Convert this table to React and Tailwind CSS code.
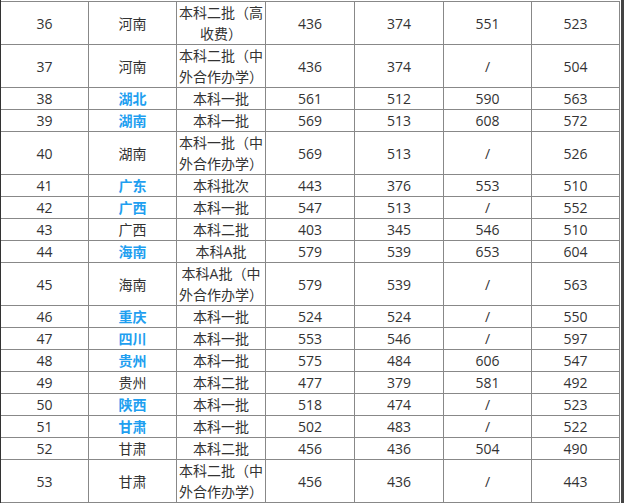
import React from 'react';

// 序号, 省份, 是否高亮, 批次, 四列分数
const rows = [
  [36, '河南', false, ['本科二批（高', '收费）'], '436', '374', '551', '523'],
  [37, '河南', false, ['本科二批（中', '外合作办学）'], '436', '374', '/', '504'],
  [38, '湖北', true, ['本科一批'], '561', '512', '590', '563'],
  [39, '湖南', true, ['本科一批'], '569', '513', '608', '572'],
  [40, '湖南', false, ['本科一批（中', '外合作办学）'], '569', '513', '/', '526'],
  [41, '广东', true, ['本科批次'], '443', '376', '553', '510'],
  [42, '广西', true, ['本科一批'], '547', '513', '/', '552'],
  [43, '广西', false, ['本科二批'], '403', '345', '546', '510'],
  [44, '海南', true, ['本科A批'], '579', '539', '653', '604'],
  [45, '海南', false, ['本科A批（中', '外合作办学）'], '579', '539', '/', '563'],
  [46, '重庆', true, ['本科一批'], '524', '524', '/', '550'],
  [47, '四川', true, ['本科一批'], '553', '546', '/', '597'],
  [48, '贵州', true, ['本科一批'], '575', '484', '606', '547'],
  [49, '贵州', false, ['本科二批'], '477', '379', '581', '492'],
  [50, '陕西', true, ['本科一批'], '518', '474', '/', '523'],
  [51, '甘肃', true, ['本科一批'], '502', '483', '/', '522'],
  [52, '甘肃', false, ['本科二批'], '456', '436', '504', '490'],
  [53, '甘肃', false, ['本科二批（中', '外合作办学）'], '456', '436', '/', '443'],
];

const Cell = ({ tall, children, className = '' }) => (
  <div
    className={`flex flex-col items-center justify-center bg-white text-center text-[14px] leading-[21px] ${
      tall ? 'h-[42px]' : 'h-[21px]'
    } ${className}`}
  >
    {children}
  </div>
);

export default function App() {
  return (
    <div className="flex h-[503px] w-[624px] overflow-hidden bg-white font-['Open_Sans','Noto_Sans_CJK_SC',sans-serif] text-[#333]">
      <div className="w-px shrink-0 bg-[#333]" />
      <div className="w-[620px] shrink-0 pt-px">
        <div className="grid w-[619px] grid-cols-[87px_87px_88px_88px_88px_87px_87px] gap-px border-y border-r border-[#888] bg-[#888]">
          {rows.map(([no, prov, hot, batch, a, b, c, d]) => {
            const tall = batch.length > 1;
            return (
              <React.Fragment key={no}>
                <Cell tall={tall}>{no}</Cell>
                <Cell tall={tall} className={hot ? 'font-bold text-[#1f9ff0]' : ''}>
                  {prov}
                </Cell>
                <Cell tall={tall}>
                  {batch.map((line) => (
                    <span key={line} className="whitespace-nowrap">
                      {line}
                    </span>
                  ))}
                </Cell>
                <Cell tall={tall}>{a}</Cell>
                <Cell tall={tall}>{b}</Cell>
                <Cell tall={tall}>{c}</Cell>
                <Cell tall={tall}>{d}</Cell>
              </React.Fragment>
            );
          })}
        </div>
      </div>
      <div className="w-[3px] shrink-0 bg-[#444]" />
    </div>
  );
}
